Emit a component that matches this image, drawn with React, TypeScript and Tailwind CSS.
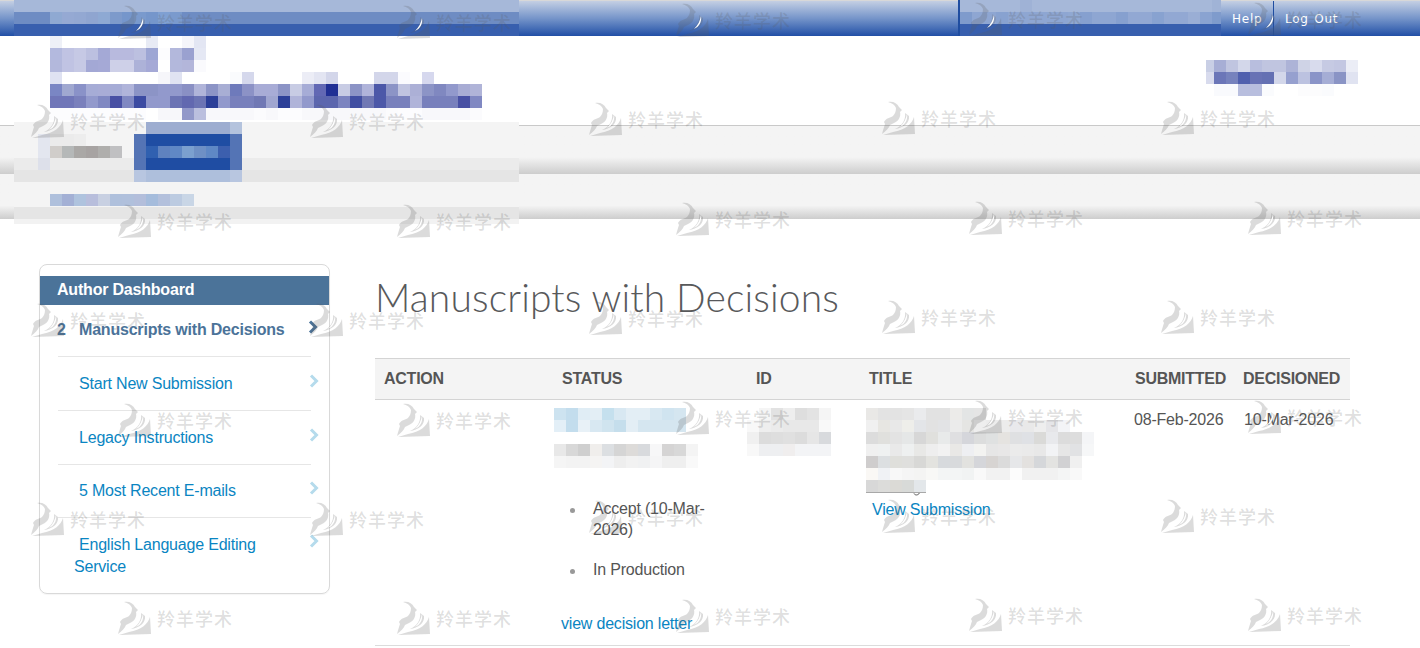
const sans = "font-['Liberation_Sans',Arial,sans-serif]";

// pixelated (redacted) blocks, one string per row, "-" is an empty cell
function Mosaic({ rows, cell = 12, first }: { rows: string[]; cell?: number; first?: number }) {
  const parsed = rows.map((r) => r.split(' '));
  const cols = Math.max(...parsed.map((r) => r.length));
  const head = first ?? cell;
  const width = head + (cols - 1) * cell;
  return (
    <svg width={width} height={rows.length * 12} className="block shrink-0" shapeRendering="crispEdges">
      {parsed.map((row, y) =>
        row.map((c, x) =>
          c === '-' ? null : (
            <rect
              key={`${x}-${y}`}
              x={x === 0 ? 0 : head + (x - 1) * cell}
              y={y * 12}
              width={x === 0 ? head : cell}
              height={12}
              fill={`#${c}`}
            />
          ),
        ),
      )}
    </svg>
  );
}

const topRight = [
  'a6b8d9 a6b8d9 a6b8d9 a6b8d9 a6b8d9 9fb2d6 a6b8d9 a6b8d9 a6b8d9 a6b8d9 a6b8d9 a6b8d9 a6b8d9 a6b8d9 a6b8d9 a6b8d9 a6b8d9 a6b8d9 a6b8d9 a6b8d9 a6b8d9 a0b3d6',
  '7f9bcc 8ea6d2 8ea6d2 88a2d0 8ea6d2 8ea6d2 8ea6d2 8ea6d2 8ea6d2 90a8d2 86a0cf 8ea6d2 8ea6d2 86a0cf 92a8d3 92a8d3 88a2d0 92a8d3 92a8d3 9aaed5 8aa3d1 7f9bcc',
  '385fae 385fae 385fae 385fae 385fae 385fae 385fae 385fae 385fae 385fae 385fae 385fae 385fae 385fae 385fae 385fae 385fae 385fae 385fae 385fae 385fae 385fae',
];

const topLeft = [
  Array(43).fill('a6b8d9').join(' '),
  ['6e8cc3', '6e8cc3', '6e8cc3', '8fa9d2', '95a9d3', '93a8d2', '8fa5d0', '8ea9d3', '7d9acb', '7596cb', '7a9acd', '7596cb', '7fa0d2', '7a9acd', '6e8cc3', ...Array(28).fill('6e8cc3')].join(' '),
  Array(43).fill('385fae').join(' '),
];

const titleRows = [
  'eef0f7 - - - - - - - e8ebf5 - - f5f5fa e3e6f3',
  'b3b9de c0c3e3 c6c9e5 bcc0e0 a4a9d6 b8bade b8bade bcc0e0 9da6d4 fcfcfe b3b8dc 9aa1d0 e5e8f4',
  'b3b8dc c0c3e3 c6c9e5 a3a8d5 a5a9d6 ced0e8 ced0e8 adb2d8 a5a9d6 ffffff b3b8dc b3b6da fafafd',
  'dfe2f2 - - - - - - - - f6f6fa e0e3f2 - - - - fafbfd d5d8ec - - - - ecedf6 e3e5f2 d3d6ea - - - d3d6ea d3d6ea fbfbfe - d6d8ee',
  '7a86c4 a0a8d0 8a92c8 a6acd6 a8acd6 a6acd6 b0b4da 8c94c6 8c94c6 9299cc 9299cc 8a90c4 b0b4d9 8c94c6 a8aed4 6e7abb 8c92c6 a8acd6 a8acd6 8c94c6 c8cce4 a6acd6 6268b4 202f94 c8cce4 8c94c6 b0b4da 4c58a8 8c94c6 c0c4e0 acb0d6 8c94c6 8088c0 9299cc a8acd4 b0b4d8',
  '7076b8 7076b8 7a80bc 9299cc 8088c2 4850a4 8088c2 3c4ba2 9299cc 9299cc 6c74b4 6268b0 6c74b4 2c3f98 9299cc 7880bc 7880bc 7078b4 a0a6d0 2c3f98 b0b4d9 9299cc 5c66ae 5c66ae 7c84c0 404ea2 7078b4 4c58a8 7880bc 7880bc b0b4d9 7880bc 7880bc 7880bc 4850a4 8088c2',
  'fcfcfe fcfcfe fcfcfe fcfcfe fcfcfe fcfcfe fcfcfe fcfcfe - f7f7fa f7f7fa 9298c9 bbbfde f8f8fb f8f8fb f8f8fb f8f8fb fbfbfd f8f8fb fcfcfe fcfcfe f8f8fb f8f8fb f8f8fb f8f8fb f8f8fb f8f8fb f8f8fb fbfbfd fcfcfe fcfcfe f8f8fb f8f8fb f8f8fb f8f8fb fbfbfd',
];

const userRows = [
  'c9cfe5 a7aed5 c0c5e0 d3d7ea b8bede c0c5e0 c0c5e0 adb3d7 cfd3e6 d8dbed c6cae3 c3c7e2 ebedf6',
  'd8dbed 6b76b8 7682bd 5060ae 6872b5 6470b3 d3d7ea 96a0cf bcc2e0 8a94c8 a5add5 8a94c5 e0e3f1',
  '- f9fafd f9fafd b8bede b8bede fafbfd - - fcfcfd fcfcfd fafbfd - -',
];

const blueBlock = [
  '- 9dadd0 9dadd0 9dadd0 9dadd0 9dadd0 9dadd0 9dadd0 b4c3dd',
  '5474b5 1f4da3 1f4da3 1f4da3 1f4da3 1f4da3 1f4da3 1f4da3 5474b5',
  '5474b5 3060b0 5f82bf 6088c5 7ba0cf 6e90c5 5f88c5 3c5fae 5474b5',
  '5474b5 1f4da3 1f4da3 1f4da3 1f4da3 1f4da3 1f4da3 1f4da3 5474b5',
  'b8c6e0 aebfdc aebfdc aebfdc aebfdc aebfdc aebfdc aebfdc b8c6e0',
];

const statusLink = [
  'cde3f0 c3dded e0edf5 e3eef5 c5e0ee d8e8f2 e3eef5 e3eef5 d8e8f2 d0e4f0 d5e6f0',
  'e3eff7 c3dded e8f1f7 d8e8f2 d0e4ef c5deec e3eef5 d5e6f0 d5e6f0 d5e6f0 d5e6f0',
];

const statusMeta = [
  'e8e8e8 d8d8d8 cfcfcf f0eeec dcdfe2 d5d5d5 dddbd9 d8dadd f7f7f8 d5d4d4 d8d8d8 f4f4f4',
  'f5f5f5 f3f3f3 f3f3f3 f5f4f3 f3f4f6 eeeeee f2f2f2 f0f1f2 f5f5f6 efefef efefef f9f9f9',
];

const idRows = [
  '- f5f5f5 e2e2e2 eeeeee dedede e3e3e3 f5f5f5',
  'f8f8f8 eeeeee ebebeb e8e8e8 e8e8e8 e8e8e8 f9f9f9',
  'f0f0f0 dcdcdc dedede e0e0e0 dcdcdc e6e6e6 d8dadd',
  'f8f8f8 eeeff1 eeeff1 f0eeee f3f4f6 f3f4f6 f3f4f6',
];

const titleCell = [
  'e9e8e6 e3e3e3 e3e3e3 e5e5e5 eaebed e2e2e2 e2e2e2 ecebe9 e3e5e5 e5e5e5',
  'f0f0f0 e7e6e2 e8e8e8 eeeeea e3e5e8 e2e2e2 e2e3e5 ebebeb e5e5e3 eeeeee ececec ececec e9e9ec e9e9e9 eeeeee e5e5e8 f3f4f7',
  'dcdcdc e0e0dd e3e3e3 e5e7e7 d7d7d7 e0e0dd e8eaea dfdfe1 d5d6db dcdddd dfe1e1 e5e3e0 dfe0e2 dfe1e5 dadad8 e8e9ec dcdcdc dddddd f4f5f7',
  'f0f0f0 eff1f1 e9e9e9 eef0f0 e8e8e6 eeeeee f2f2f2 e9e8e6 eeeff2 f3f3f1 e6e6e6 e8e7e7 ebebeb eaeaea e8e8e8 f2f3f5 e6e6e6 e1e2e4 f6f7f8',
  'cfcdcd dcdfe1 dfdfdb dfdfdd d8d8d6 e3e3df d7dadd d8dadc e2e2df d5d6da d7d4d2 dbdbdb e6e7e9 e3e1df d5d7da e3e3e1 d1d1d3 f0f0f0',
  'faf8f5 f0f2f5 f8f8f8 f5f5f5 f4f4f3 f8f8f6 f3f5f5 f3f5f5 f1f3f3 f9f9f9 f2f2f2 f2f2f2 fcfcfc f1f1f1 f1f1f1 f1f1f1 f4f5f5 f9f9f9',
  'd8d8d8 dcdcda dbdad6 d8dad8 e3e7ea',
];

const cols = [0, 0, -2, -3, -3];
const xsEven = [117, 396, 675, 968, 1247];
const xsOdd = [30, 309, 588, 881, 1160];

function Watermark({ x, y }: { x: number; y: number }) {
  return (
    <div className="absolute flex items-center" style={{ left: x, top: y }}>
      <svg width="34" height="34" viewBox="0 0 34 34" className="shrink-0">
        <g fill="#5a5a5a" fillOpacity="0.22">
          <path d="M7 1C12 0 16 2 18 6L21 9L19 11C20 15 18 20 13 22L9 24C8 27 5 30 1 33C2 29 3 26 4 23L3 21C5 17 9 17 12 15C14 13 15 10 15 7C14 4 11 2 7 1Z" />
          <path d="M24 12C25 19 21 25 14 28C22 27 29 22 28 15Z" />
          <path d="M33 16C31 23 24 29 12 31L2 34L34 33Z" />
        </g>
        <path d="M26 13C27 19 24 24 19 26C23 22 25 18 26 13Z" fill="#ffffff" />
      </svg>
      <span className="ml-[6px] whitespace-nowrap font-['Noto_Sans_CJK_SC',sans-serif] text-[18px] font-medium leading-[20px] tracking-[1px] text-[#5a5a5a]/20">
        羚羊学术
      </span>
    </div>
  );
}

const Chevron = ({ active }: { active?: boolean }) => (
  <svg width="10" height="14" viewBox="0 0 10 14" className="shrink-0">
    <path d="M2 1.5L7.5 7L2 12.5" fill="none" strokeWidth="3" stroke={active ? '#4b7399' : '#b5dbec'} />
  </svg>
);

const Separator = () => <div className="mx-[18px] h-px bg-[#e6e6e6]" />;

function Sidebar() {
  return (
    <div className="h-[330px] w-[291px] shrink-0 rounded-lg border border-[#d9d9d9] pt-[11px] text-[16px] leading-[22px] tracking-[-0.2px] text-[#0a85c2] shadow-[0_1px_1px_rgba(0,0,0,0.04)]">
      <div className="h-[29px] bg-[#4b7399] pl-[17px] font-bold leading-[27px] text-white">Author Dashboard</div>
      <div className="flex h-[51px] items-start justify-between pl-[17px] pr-[11px] pt-[14px] font-bold text-[#4b7399]">
        <span className="flex">
          <span className="w-[22px]">2</span>Manuscripts with Decisions
        </span>
        <span className="mt-[1px]"><Chevron active /></span>
      </div>
      <Separator />
      <div className="flex h-[53px] items-start justify-between pl-[39px] pr-[10px] pt-[16px]">
        <span>Start New Submission</span>
        <span className="mt-[1px]"><Chevron /></span>
      </div>
      <Separator />
      <div className="flex h-[53px] items-start justify-between pl-[39px] pr-[10px] pt-[16px]">
        <span>Legacy Instructions</span>
        <span className="mt-[1px]"><Chevron /></span>
      </div>
      <Separator />
      <div className="flex h-[52px] items-start justify-between pl-[39px] pr-[10px] pt-[15px]">
        <span>5 Most Recent E-mails</span>
        <span className="mt-[1px]"><Chevron /></span>
      </div>
      <Separator />
      <div className="flex items-start justify-between pl-[34px] pr-[10px] pt-[16px]">
        <span className="w-[200px] indent-[5px]">English Language Editing Service</span>
        <span><Chevron /></span>
      </div>
    </div>
  );
}

const bullet =
  "relative before:absolute before:left-[-23px] before:top-[10px] before:h-[5px] before:w-[5px] before:rounded-full before:bg-[#999999] before:content-['']";

function ManuscriptTable() {
  return (
    <table className="w-[975px] table-fixed border-collapse text-[16px] leading-[22px] tracking-[-0.2px] text-[#555555]">
      <colgroup>
        <col className="w-[178px]" />
        <col className="w-[194px]" />
        <col className="w-[113px]" />
        <col className="w-[266px]" />
        <col className="w-[108px]" />
        <col className="w-[116px]" />
      </colgroup>
      <thead>
        <tr className="h-[41px] border-y border-[#d4d4d4] bg-[#f4f4f4] text-left font-bold tracking-[-0.25px]">
          <th className="pl-[9px]">ACTION</th>
          <th className="pl-[9px]">STATUS</th>
          <th className="pl-[9px]">ID</th>
          <th className="pl-[9px]">TITLE</th>
          <th className="pl-[9px]">SUBMITTED</th>
          <th className="pl-[9px]">DECISIONED</th>
        </tr>
      </thead>
      <tbody>
        <tr className="h-[246px] border-b border-[#dcdcdc] align-top">
          <td />
          <td className="pl-[1px] pt-[8px]">
            <Mosaic rows={statusLink} />
            <div className="mt-[12px]"><Mosaic rows={statusMeta} /></div>
            <ul className="mt-[30px] pl-[39px] pr-[9px] leading-[21px]">
              <li className={`mb-[19px] ${bullet}`}>Accept (10-Mar-2026)</li>
              <li className={bullet}>In Production</li>
            </ul>
            <a className="ml-[7px] mt-[33px] block text-[#0a85c2]">view decision letter</a>
          </td>
          <td className="pt-[8px]">
            <Mosaic rows={idRows} />
          </td>
          <td className="pl-[6px] pt-[8px]">
            <div className="relative">
              <Mosaic rows={titleCell} />
              <div className="absolute left-0 top-[84px] h-px w-[60px] bg-[#a8a8a8]" />
              <svg width="8" height="4" viewBox="0 0 8 4" className="absolute left-[47px] top-[85px]">
                <path d="M1 0.5C2 2.5 5 2.5 6.5 0" fill="none" stroke="#555555" strokeWidth="1" />
              </svg>
            </div>
            <a className="ml-[6px] mt-[7px] block text-[#0a85c2]">View Submission</a>
          </td>
          <td className="pl-[8px] pt-[9px]">08-Feb-2026</td>
          <td className="pl-[10px] pt-[9px]">10-Mar-2026</td>
        </tr>
      </tbody>
    </table>
  );
}

export default function App() {
  return (
    <div className={`relative h-[648px] w-full overflow-hidden bg-white ${sans}`}>
      {/* top bar */}
      <div className="flex h-[36px] items-stretch border-t border-[#d8d8d8] bg-gradient-to-b from-[#c4cfe3] via-[#7594c9] to-[#214fa6] font-['DejaVu_Sans',Verdana,sans-serif] text-[12px] tracking-[0.75px] text-white">
        <div className="-mt-px ml-[14px] w-[505px] overflow-hidden"><Mosaic rows={topLeft} /></div>
        <div className="flex-1" />
        <div className="-mt-px w-[263px] overflow-hidden border-l-2 border-[#1f4da0]"><Mosaic rows={topRight} /></div>
        <div className="flex w-[53px] items-center justify-start border-r border-[#1f4da0] pl-[11px]">Help</div>
        <div className="flex w-[146px] items-center pl-[11px] [word-spacing:1px]">Log Out</div>
      </div>

      {/* journal header */}
      <div className="flex h-[89px] items-start justify-between pl-[50px] pr-[62px]">
        <Mosaic rows={titleRows} />
        <div className="mt-[24px]"><Mosaic rows={userRows} first={8} /></div>
      </div>

      {/* nav bands */}
      <div className="h-[49px] border-t border-[#c9c9c9] bg-gradient-to-b from-[#f4f4f4] from-65% to-[#cdcdcd]" />
      <div className="h-[45px] bg-gradient-to-b from-[#f4f4f4] from-70% to-[#cdcdcd]" />

      {/* redacted part of the nav */}
      <div className="absolute left-[14px] top-[122px] w-[505px]">
        <div className="h-[36px] bg-[#f4f4f4]" />
        <div className="h-[12px] bg-[#ebebeb]" />
        <div className="h-[12px] bg-[#e5e5e5]" />
        <div className="h-[25px] bg-[#f4f4f4]" />
        <div className="h-[12px] bg-[#e5e5e5]" />
        <div className="h-[5px] bg-[#f2f2f2]" />
        <div className="absolute left-[120px] top-0"><Mosaic rows={blueBlock} /></div>
        <div className="absolute left-[24px] top-[12px]">
          <Mosaic
            rows={[
              'e3e6ef ebebeb ebebeb ededed',
              'e3e6ef d0cdca b5b8b8 aaa8a6 a7a3a2 afaeac c0c0c2',
              'dde0ea',
            ]}
          />
        </div>
        <div className="absolute left-[36px] top-[72px]">
          <Mosaic rows={['afc0dc a3b0d5 afc3de b8bedc c8d0e2 afc0dc b0c0dc b3bedb a5bcdc b3c0dc bccbe1 c9d6e6']} />
        </div>
      </div>

      {/* main content */}
      <div className="flex items-start pl-[39px] pt-[45px]">
        <Sidebar />
        <div className="ml-[45px]">
          <h1 className="mb-[28px] font-['Lato',sans-serif] text-[39px] font-light leading-[66px] tracking-[0.13px] text-[#58595b]">
            Manuscripts with Decisions
          </h1>
          <ManuscriptTable />
        </div>
      </div>

      {/* site-wide watermark */}
      <div className="pointer-events-none absolute inset-0">
        {Array.from({ length: 7 }).map((_, row) =>
          (row % 2 === 0 ? xsEven : xsOdd).map((x, i) => (
            <Watermark key={`${row}-${i}`} x={x} y={5 + Math.round(row * 99.4) + cols[i]} />
          )),
        )}
      </div>
    </div>
  );
}
